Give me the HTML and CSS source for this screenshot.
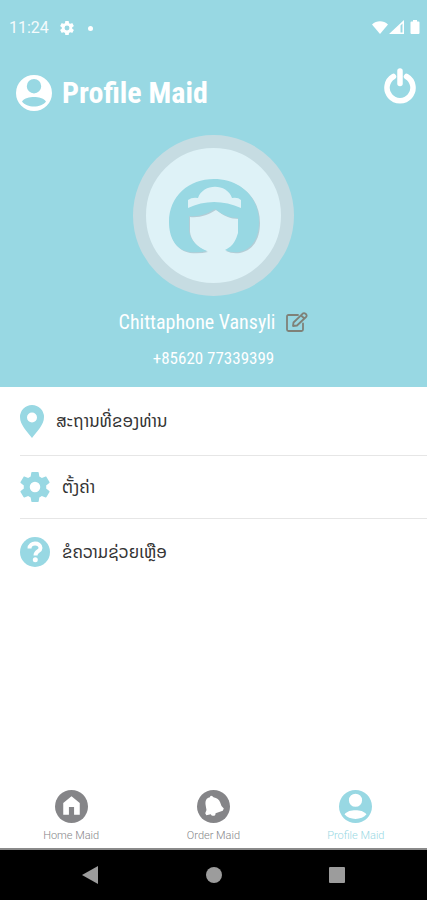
FILE: index.html
```html
<!DOCTYPE html>
<html lang="lo">
<head>
<meta charset="utf-8">
<meta name="viewport" content="width=device-width, initial-scale=1">
<title>Profile Maid</title>
<link rel="stylesheet" href="styles.css">
</head>
<body>
<svg width="0" height="0" class="defs" aria-hidden="true">
  <symbol id="person" viewBox="0 0 36 36">
    <path fill="currentColor" fill-rule="evenodd" d="M18 0a18 18 0 1 0 0 36a18 18 0 0 0 0-36zM18 4a7.200 7.200 0 1 1 0 14.400a7.200 7.200 0 0 1 0-14.400zM6 26.500c2.500-3.500 7.500-4.500 12-4.500s9.500 1 12 4.500c-2.500 3.500-7 5-12 5s-9.500-1.500-12-5z"/>
  </symbol>
  <symbol id="gear" viewBox="2 2 20 20">
    <path fill="currentColor" d="M19.430 12.980c.04-.32.07-.64.07-.98s-.03-.66-.07-.98l2.110-1.650c.19-.15.24-.42.12-.64l-2-3.460c-.12-.22-.39-.3-.61-.22l-2.490 1c-.52-.4-1.080-.73-1.690-.98l-.38-2.650C14.460 2.180 14.250 2 14 2h-4c-.25 0-.46.18-.49.42l-.38 2.650c-.61.25-1.170.59-1.690.98l-2.490-1c-.23-.09-.49 0-.61.22l-2 3.460c-.13.22-.07.49.12.64l2.110 1.650c-.04.32-.07.65-.07.98s.03.66.07.98l-2.110 1.650c-.19.15-.24.42-.12.64l2 3.460c.12.22.39.3.61.22l2.490-1c.52.4 1.080.73 1.690.98l.38 2.650c.03.24.24.42.49.42h4c.25 0 .46-.18.49-.42l.38-2.650c.61-.25 1.170-.59 1.690-.98l2.490 1c.23.09.49 0 .61-.22l2-3.460c.12-.22.07-.49-.12-.64l-2.110-1.650zM12 15.500a3.500 3.500 0 1 1 0-7a3.500 3.500 0 0 1 0 7z"/>
  </symbol>
</svg>
<div class="app">
  <header class="hero">
    <div class="status">
      <span class="time">11:24</span>
      <svg class="status-gear"><use href="#gear"/></svg>
      <span class="dot"></span>
      <svg class="signals" viewBox="0 0 48 16">
        <path fill="#fff" d="M0 4.500C4.500.1 11.500.1 16 4.500L8 14z"/>
        <path fill="#fff" d="M17 14L32 0v14zM28.500 5.500V12.500h2V3.500z" fill-rule="evenodd"/>
        <path fill="#fff" d="M41 0h4v1.500h1.500a1 1 0 0 1 1 1V13a1 1 0 0 1-1 1h-7a1 1 0 0 1-1-1V2.500a1 1 0 0 1 1-1H41z"/>
      </svg>
    </div>
    <div class="title-bar">
      <svg class="title-icon"><use href="#person"/></svg>
      <h1>Profile Maid</h1>
      <button class="power" type="button" aria-label="Log out">
        <svg viewBox="0 0 32 36" fill="none" stroke="#fff" stroke-width="5.500">
          <path d="M9.500 8.500A13 13 0 1 0 22.500 8.500" stroke-linecap="round"/>
          <path d="M16 3V15.500" stroke-linecap="round"/>
        </svg>
      </button>
    </div>
    <div class="avatar">
      <svg viewBox="0 0 90 74">
        <path class="hair-shade" d="M38 72Q30 74 20 73C6 70 0 58 0 43C0 17 20 0 45 0S90 17 90 43C90 58 84 70 70 73Q62 74 56 71C65 67 67 60 69 54V39C60 39 54 36 46 30C38 35 30 38 20 37V52C21 60 27 68 38 72z"/>
        <path fill="#98d8e3" d="M38 72Q30 74 20 73C6 70 0 58 0 43C0 17 20 0 45 0S90 17 90 43C90 58 84 70 70 73Q62 74 56 71C65 67 67 60 69 54V39C60 39 54 36 46 30C38 35 30 38 20 37V52C21 60 27 68 38 72z"/>
        <path fill="#def2f7" d="M19 21Q23 18 29 19C34 4 58 4 63 19Q69 18 72 21V29C55 21 35 21 19 29z"/>
      </svg>
    </div>
    <div class="name-row">
      <span class="name">Chittaphone Vansyli</span>
      <button class="edit" type="button" aria-label="Edit name">
        <svg viewBox="0 0 22 20" fill="none" stroke="#7f8178" stroke-width="1.800" stroke-linejoin="round" stroke-linecap="round">
          <path d="M12 3H2.500Q1 3 1 4.500V17.500Q1 19 2.500 19H15.500Q17 19 17 17.500V11.500"/>
          <path d="M7 14L7.500 10.500L16.500 1.800Q18 .5 19.500 1.800Q21.500 3.500 20 5L11 13.500zM15 3.500L18.500 6.500"/>
        </svg>
      </button>
    </div>
    <p class="phone">+85620 77339399</p>
  </header>
  <main class="menu">
    <a class="item" href="#location">
      <svg class="pin" viewBox="0 0 24 33"><path fill="currentColor" fill-rule="evenodd" d="M12 0A12 12 0 0 0 0 12C0 20 7 26 12 33C17 26 24 20 24 12A12 12 0 0 0 12 0zM12 7.500a5 5 0 1 1 0 10a5 5 0 0 1 0-10z"/></svg>
      <span>ສະຖານທີ່ຂອງທ່ານ</span>
    </a>
    <a class="item" href="#settings">
      <svg class="icon"><use href="#gear"/></svg>
      <span>ຕັ້ງຄ່າ</span>
    </a>
    <a class="item" href="#help">
      <svg class="icon" viewBox="0 0 30 30"><circle cx="15" cy="15" r="15" fill="currentColor"/><path d="M9.500 11.500C9.500 5 20.500 5 20.500 11C20.500 14.500 15.500 14 15.500 18.500" fill="none" stroke="#fff" stroke-width="4"/><circle cx="15.300" cy="22.800" r="2.500" fill="#fff"/></svg>
      <span>ຂໍຄວາມຊ່ວຍເຫຼືອ</span>
    </a>
  </main>
  <nav class="tabs">
    <a class="tab" href="#home">
      <svg viewBox="0 0 32 32"><circle cx="16" cy="16" r="16" fill="currentColor"/><path fill="#fff" d="M16 6L24 12.500V24H18.500V16.500H13.500V24H8V12.500z"/></svg>
      <span>Home Maid</span>
    </a>
    <a class="tab" href="#order">
      <svg viewBox="0 0 32 32"><circle cx="16" cy="16" r="16" fill="currentColor"/><path fill="#fff" d="M9.500 8.500Q11 7 12.500 7Q13 5 15 6L16 7Q21 8 22.500 12Q23 15 26 18L25 20L18 22.500Q18 25.500 15 25Q13.500 24.800 13.500 23.500L9 24.500L8 22.500Q10 19 8.500 15.500Q7.500 11 9.500 8.500z"/></svg>
      <span>Order Maid</span>
    </a>
    <a class="tab active" href="#profile" aria-current="page">
      <svg><use href="#person"/></svg>
      <span>Profile Maid</span>
    </a>
  </nav>
  <footer class="system">
    <button type="button" aria-label="Back"><svg viewBox="0 0 18 18"><path fill="#9c9c9c" d="M0 9L16 0V18z"/></svg></button>
    <button type="button" aria-label="Home"><svg viewBox="0 0 18 18"><circle cx="9" cy="9" r="8" fill="#9c9c9c"/></svg></button>
    <button type="button" aria-label="Recent apps"><svg viewBox="0 0 18 18"><rect x="1" y="1" width="16" height="16" rx="1" fill="#9c9c9c"/></svg></button>
  </footer>
</div>
</body>
</html>
```
FILE: styles.css
```css
* { box-sizing: border-box; }
body { margin: 0; background: #fff; font-family: Roboto, "Noto Sans", sans-serif; }
button { border: 0; padding: 0; background: none; }
svg { display: block; flex: none; }
a { color: inherit; text-decoration: none; }
.defs { position: absolute; }
.app { min-height: 100vh; display: flex; flex-direction: column; }

.hero { background: #98d8e3; color: #fff; padding-bottom: 17px; font-family: "Roboto Condensed", "Liberation Sans Narrow", Roboto, sans-serif; }
.status { display: flex; align-items: center; padding: 16px 7px 0 9px; height: 40px; }
.time { font: 16px/24px Roboto, sans-serif; opacity: .9; }
.status-gear { width: 14px; height: 14px; margin-left: 11px; }
.dot { width: 5px; height: 5px; border-radius: 50%; background: #fff; margin-left: 14px; }
.signals { width: 48px; height: 16px; margin-left: auto; }

.title-bar { display: flex; align-items: center; padding: 26px 11px 0 16px; height: 80px; margin-bottom: 15px; }
.title-icon { width: 36px; height: 36px; }
h1 { margin: 0 auto 0 10px; font-size: 30px; line-height: 36px; font-weight: 700; }
.power { margin-bottom: 14px; }
.power svg { width: 32px; height: 36px; }

.avatar { width: 161px; height: 161px; margin: 0 auto; border-radius: 50%; border: 13px solid #c6dce2; background: #def2f7; display: flex; align-items: center; justify-content: center; }
.avatar svg { width: 90px; height: 74px; overflow: visible; }
.hair-shade { fill: #b4cdd6; transform: translate(1px, 1px); }

.name-row { display: flex; justify-content: center; align-items: center; gap: 11px; margin-top: 12px; }
.name { font-size: 20px; line-height: 28px; }
.edit svg { width: 22px; height: 20px; }
.phone { margin: 10px 0 0; text-align: center; font-size: 17px; line-height: 24px; }

.menu { flex: 1; padding-left: 20px; color: #98d8e3; }
.item { display: flex; align-items: center; gap: 12px; height: 63px; border-bottom: 1px solid #e6e6e6; }
.item:first-child { height: 69px; }
.item:last-child { border-bottom: 0; height: 66px; }
.item span { color: #333; font: 17px/24px "Noto Sans Lao", "DejaVu Sans", sans-serif; }
.pin { width: 24px; height: 33px; }
.icon { width: 30px; height: 30px; }

.tabs { display: grid; grid-template-columns: repeat(3, 1fr); padding-bottom: 6px; border-bottom: 2px solid #8a8a8a; color: #858588; }
.tab { display: flex; flex-direction: column; align-items: center; gap: 6px; }
.tab svg { width: 33px; height: 33px; }
.tab span { font-size: 11px; line-height: 13px; font-weight: 300; }
.tab.active { color: #98d8e3; }

.system { background: #000; height: 50px; display: flex; justify-content: center; align-items: center; gap: 105px; }
.system svg { width: 18px; height: 18px; }
```
